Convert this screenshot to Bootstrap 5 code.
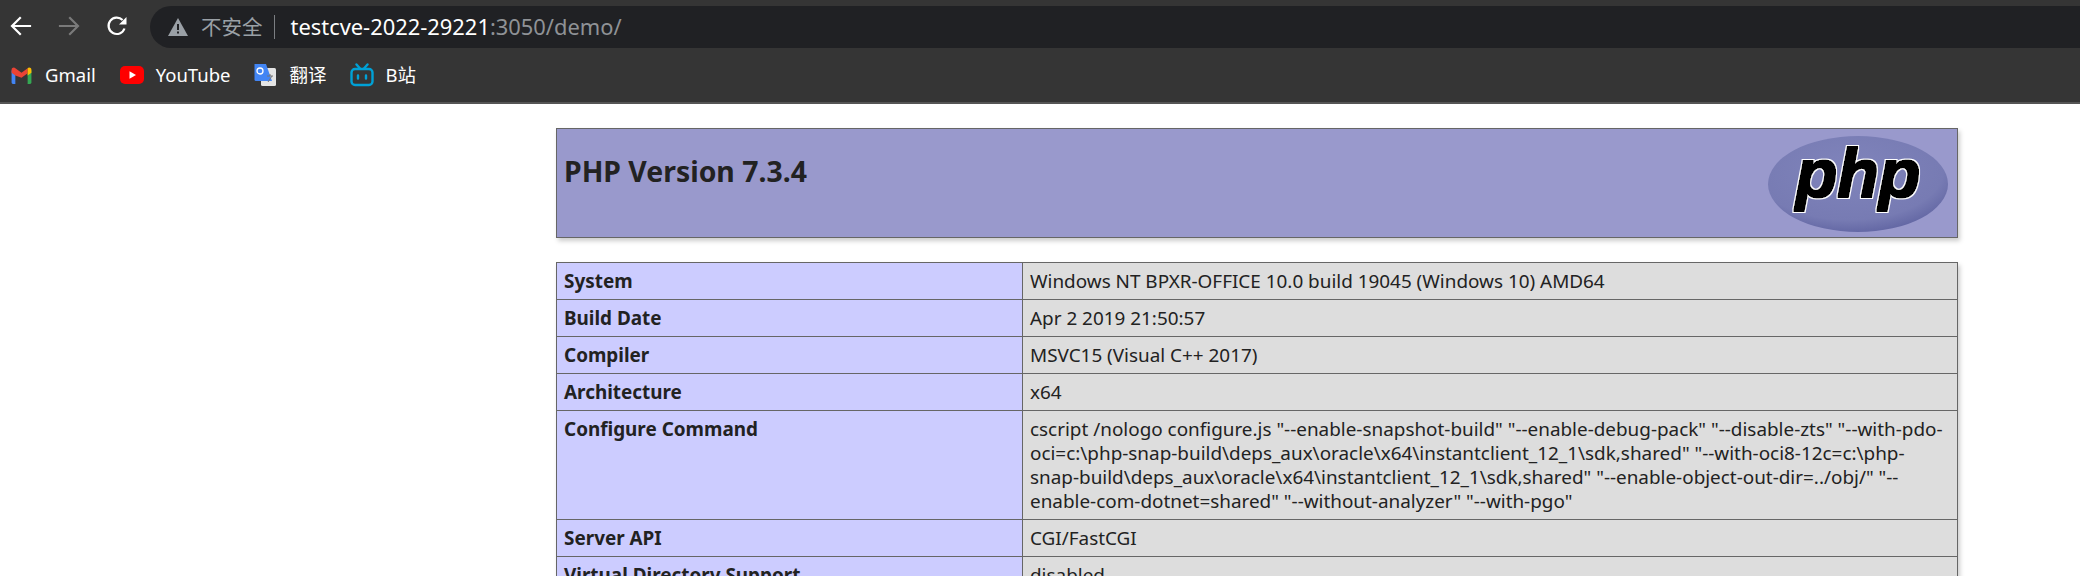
<!DOCTYPE html>
<html lang="zh">
<head>
<meta charset="utf-8">
<title>phpinfo</title>
<link href="https://cdn.jsdelivr.net/npm/bootstrap@5.3.0/dist/css/bootstrap.min.css" rel="stylesheet">
<style>
html,body{height:576px;overflow:hidden;background:#fff}
body{font-family:"Noto Sans","Noto Sans CJK SC",sans-serif;color:#222}
.chrome-top{background:#353535;height:104px;border-bottom:2px solid #555;color:#fff}
.nav-row{height:54px;padding-top:6px}
.nav-btns{width:150px;padding-left:9px;gap:24px}
.nav-btns svg{width:24px;height:24px;display:block}
.omni{height:42px;background:#202124;border-radius:21px 0 0 21px;padding-left:18px;font-size:21.9px}
.sec-label{color:#9aa0a6;margin-left:13px;font-size:20.5px}
.sec-sep{width:1px;height:24px;background:#7b7e82;margin:0 16px 0 11px}
.url-host{color:#fff}
.url-rest{color:#8f9296}
.marks{height:42px;font-size:18.5px;padding-left:10px}
.mark-item svg{display:block}
.mi-gmail{margin-right:24px}.mi-gmail svg{margin-right:12px}
.mi-yt{margin-right:23px}.mi-yt svg{margin-right:12px}
.mi-tr{margin-right:23px}.mi-tr svg{margin-right:12px}
.mi-bl svg{margin-right:12px}
.php-wrap{margin:24px 0 0 556px;width:1402px}
.php-head{height:110px;background:#99c;border:1px solid #666;box-shadow:1.5px 3px 4.5px #ccc;margin-bottom:24px;padding:21px 8px 0 7px}
.php-head h1{font-size:28.4px;font-weight:700;margin:0;line-height:1.5;color:#222}
.php-logo{width:182px;height:98px;display:block;margin:-15px 0 0 0}
.info-tbl{width:1402px;table-layout:fixed;border-collapse:collapse;box-shadow:1.5px 3px 4.5px #ccc;margin:0;font-size:18.9px;line-height:24px}
.info-tbl td{border:1px solid #666;padding:6px 7px;vertical-align:top;color:#222}
.info-tbl td.lbl{width:466px;background:#ccf;font-weight:700}
.info-tbl td.val{background:#ddd;white-space:nowrap;overflow:hidden}
</style>
</head>
<body>
<header class="chrome-top">
  <div class="nav-row d-flex align-items-start">
    <div class="nav-btns d-flex align-items-center pt-2">
      <svg viewBox="0 0 24 24" fill="none" stroke="#fff" stroke-width="2.2" stroke-linecap="square"><path d="M21 12H4M11 4l-8 8 8 8"/></svg>
      <svg viewBox="0 0 24 24" fill="none" stroke="#7a7a7a" stroke-width="2.2" stroke-linecap="square"><path d="M3 12h17M13 4l8 8-8 8"/></svg>
      <svg viewBox="0 0 24 24" fill="none" stroke="#fff" stroke-width="2.2"><path d="M19.5 14.5A8.2 8.2 0 1 1 17.6 6"/><path d="M21.5 3v7.5H14z" fill="#fff" stroke="none"/></svg>
    </div>
    <div class="omni flex-grow-1 d-flex align-items-center">
      <svg width="20" height="18" viewBox="0 0 20 18"><path d="M10 0 20 18H0z" fill="#9aa0a6"/><path d="M9 6h2v6H9zM9 13.5h2v2H9z" fill="#202124"/></svg>
      <span class="sec-label">不安全</span>
      <span class="sec-sep"></span>
      <span><span class="url-host">testcve-2022-29221</span><span class="url-rest">:3050/demo/</span></span>
    </div>
  </div>
  <nav class="marks d-flex align-items-center">
    <div class="mark-item mi-gmail d-flex align-items-center">
      <svg width="23" height="17" viewBox="0 0 24 18"><path d="M1.5 18V3.5L5.5 6.5V18H3a1.5 1.5 0 0 1-1.5-1.5z" fill="#4285f4"/><path d="M18.5 18V6.5L22.5 3.5V16.500A1.5 1.5 0 0 1 21 18z" fill="#34a853"/><path d="M5.5 9 1.5 6V3C1.5 .8 4 0 5.500 1.2L12 6l6.5-4.8V6.5L12 11.3z" fill="#ea4335"/><path d="M18.5 1.2C20 0 22.5.8 22.5 3V6l-4 3z" fill="#fbbc04"/></svg>
      <span>Gmail</span>
    </div>
    <div class="mark-item mi-yt d-flex align-items-center">
      <svg width="24" height="18" viewBox="0 0 24 18"><rect width="24" height="18" rx="5" fill="#f00"/><path d="M9.5 5.3 16 9l-6.5 3.7z" fill="#fff"/></svg>
      <span>YouTube</span>
    </div>
    <div class="mark-item mi-tr d-flex align-items-center">
      <svg width="24" height="24" viewBox="0 0 24 24"><rect x="8" y="5" width="15" height="18" rx="1.5" fill="#e4e4e4"/><path d="M1.5 1h11.5L19 18H3a1.5 1.5 0 0 1-1.5-1.5z" fill="#4285f4"/><circle cx="7" cy="8" r="3" fill="none" stroke="#fff" stroke-width="1.3"/><path d="M14 13h6M17 11v2M15 19l4-6" stroke="#777" stroke-width="1" fill="none"/></svg>
      <span>翻译</span>
    </div>
    <div class="mark-item mi-bl d-flex align-items-center">
      <svg width="24" height="24" viewBox="0 0 24 24" fill="none" stroke="#00a1d6" stroke-width="2.4"><rect x="1.5" y="6" width="21" height="16" rx="3.5"/><path d="M6.5 1.5 10 5.500M17.5 1.5 14 5.500" stroke-linecap="round"/><path d="M8 12.5v3M16 12.5v3" stroke-linecap="round"/></svg>
      <span>B站</span>
    </div>
  </nav>
</header>
<main class="php-wrap">
  <div class="php-head d-flex justify-content-between align-items-start">
    <h1>PHP Version 7.3.4</h1>
    <svg class="php-logo" viewBox="0 0 182 98" role="img" aria-label="PHP logo">
      <defs>
        <radialGradient id="lg" cx=".45" cy=".35" r=".75"><stop offset="0" stop-color="#8084bb"/><stop offset=".7" stop-color="#777bb3"/><stop offset="1" stop-color="#565a9a"/></radialGradient>
        <filter id="heavy" x="-10%" y="-10%" width="120%" height="120%">
          <feMorphology in="SourceGraphic" operator="dilate" radius="1" result="thick"/>
          <feMorphology in="SourceAlpha" operator="dilate" radius="2.2" result="outer"/>
          <feFlood flood-color="#fff" result="white"/>
          <feComposite in="white" in2="outer" operator="in" result="halo"/>
          <feMerge><feMergeNode in="halo"/><feMergeNode in="thick"/></feMerge>
        </filter>
      </defs>
      <ellipse cx="91" cy="49" rx="90" ry="48" fill="url(#lg)"/>
      <text x="91" y="62" text-anchor="middle" font-family="Liberation Sans" font-style="italic" font-weight="700" font-size="68" fill="#000" filter="url(#heavy)">php</text>
    </svg>
  </div>
  <table class="info-tbl table">
    <tbody>
      <tr><td class="lbl">System</td><td class="val">Windows NT BPXR-OFFICE 10.0 build 19045 (Windows 10) AMD64</td></tr>
      <tr><td class="lbl">Build Date</td><td class="val">Apr 2 2019 21:50:57</td></tr>
      <tr><td class="lbl">Compiler</td><td class="val">MSVC15 (Visual C++ 2017)</td></tr>
      <tr><td class="lbl">Architecture</td><td class="val">x64</td></tr>
      <tr><td class="lbl">Configure Command</td><td class="val">cscript /nologo configure.js "--enable-snapshot-build" "--enable-debug-pack" "--disable-zts" "--with-pdo-<br>oci=c:\php-snap-build\deps_aux\oracle\x64\instantclient_12_1\sdk,shared" "--with-oci8-12c=c:\php-<br>snap-build\deps_aux\oracle\x64\instantclient_12_1\sdk,shared" "--enable-object-out-dir=../obj/" "--<br>enable-com-dotnet=shared" "--without-analyzer" "--with-pgo"</td></tr>
      <tr><td class="lbl">Server API</td><td class="val">CGI/FastCGI</td></tr>
      <tr><td class="lbl">Virtual Directory Support</td><td class="val">disabled</td></tr>
    </tbody>
  </table>
</main>
</body>
</html>
